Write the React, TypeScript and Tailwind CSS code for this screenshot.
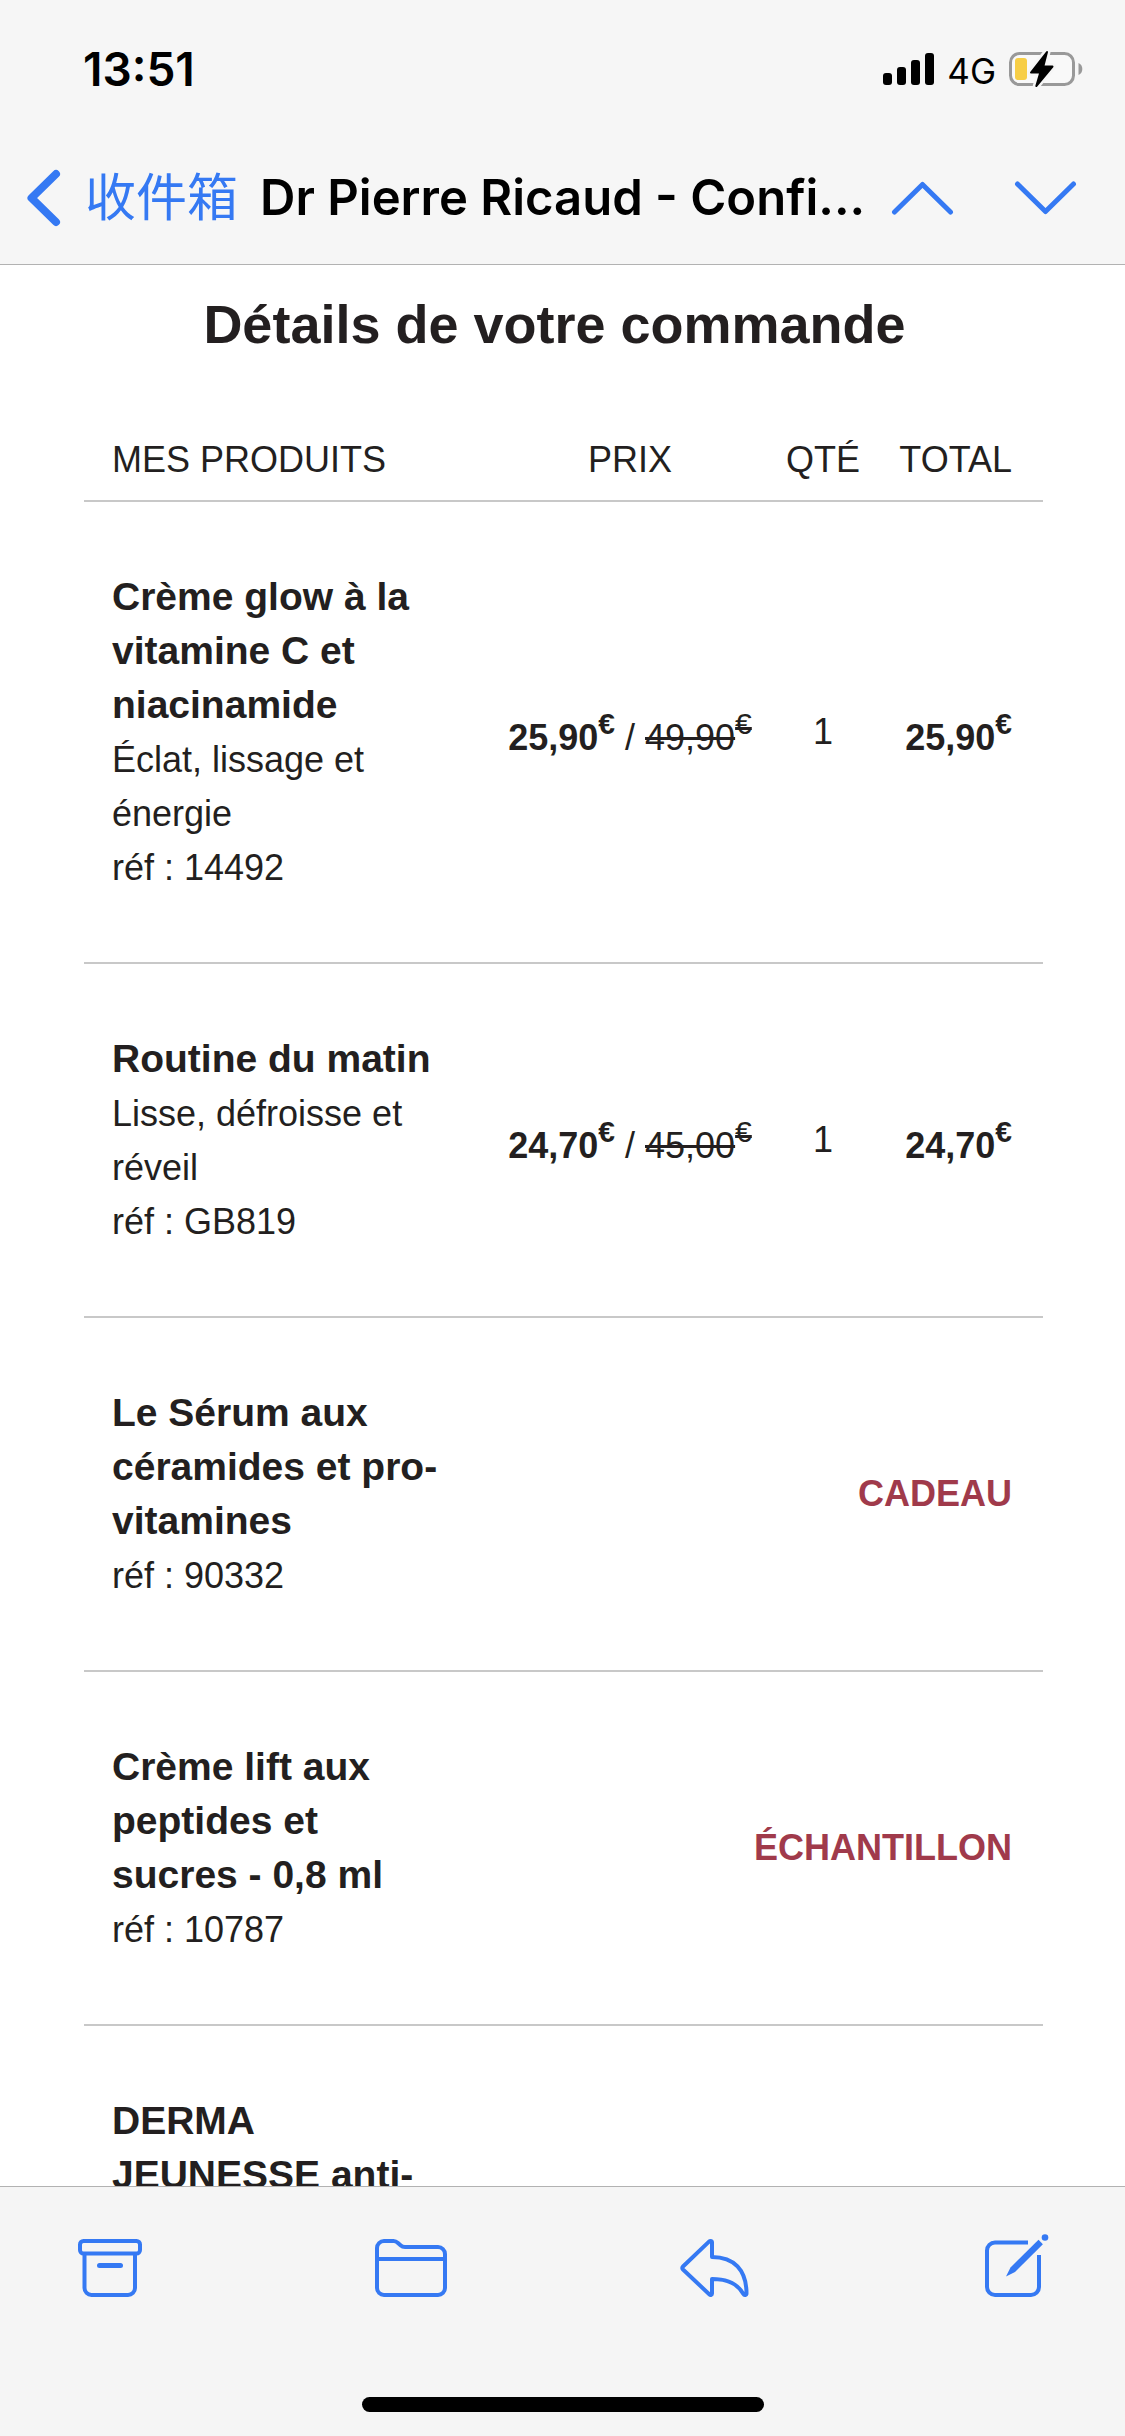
import { ReactNode } from "react";

type Product = {
  name: string;
  description?: string;
  reference?: string;
  price?: string;
  oldPrice?: string;
  quantity?: number;
  label?: string;
};

const products: Product[] = [
  {
    name: "Crème glow à la vitamine C et niacinamide",
    description: "Éclat, lissage et énergie",
    reference: "14492",
    price: "25,90",
    oldPrice: "49,90",
    quantity: 1,
  },
  {
    name: "Routine du matin",
    description: "Lisse, défroisse et réveil",
    reference: "GB819",
    price: "24,70",
    oldPrice: "45,00",
    quantity: 1,
  },
  { name: "Le Sérum aux céramides et pro-vitamines", reference: "90332", label: "CADEAU" },
  { name: "Crème lift aux peptides et sucres - 0,8 ml", reference: "10787", label: "ÉCHANTILLON" },
  { name: "DERMA JEUNESSE anti-" },
];

function Euro() {
  return <sup className="text-[30px] top-[-16px]">€</sup>;
}

function StatusBar() {
  return (
    <div className="flex h-[132px] items-center justify-between pt-[6px] pl-[83px] pr-[42px]">
      <span className="text-[46px] leading-[56px] font-semibold">13:51</span>
      <div className="flex items-center">
        <svg width="51" height="32" viewBox="0 0 51 32" aria-hidden="true">
          <rect x="0" y="20" width="9" height="12" rx="3" />
          <rect x="14" y="14" width="9" height="18" rx="3" />
          <rect x="28" y="7" width="9" height="25" rx="3" />
          <rect x="42" y="0" width="9" height="32" rx="3" />
        </svg>
        <span className="ml-[13px] pt-[3px] text-[35px] leading-[44px]">4G</span>
        <svg className="ml-[13px]" width="74" height="38" viewBox="0 0 74 38" aria-hidden="true">
          <rect x="1.500" y="3.500" width="63" height="31" rx="9" fill="#f9f9f9" stroke="#999999" strokeWidth="3" />
          <path d="M69.500 13c2.400 1 3.800 3.300 3.800 6s-1.400 5-3.800 6z" fill="#999999" />
          <rect x="6" y="8" width="12" height="22" rx="3" fill="#f7ce46" />
          <path
            d="M38 2L22 22.500H31.300L27.300 36L43.500 16.500H34.300z"
            fill="#000000"
            stroke="#f6f6f6"
            strokeWidth="7"
            strokeLinejoin="round"
          />
          <path
            d="M38 2L22 22.500H31.300L27.300 36L43.500 16.500H34.300z"
            stroke="#000000"
            strokeWidth="2"
            strokeLinejoin="round"
          />
        </svg>
      </div>
    </div>
  );
}

function NavBar() {
  return (
    <nav className="flex h-[132px] items-center justify-between pl-[27px] pr-[48px]">
      <div className="flex items-center whitespace-nowrap">
        <button className="flex items-center text-[#3579f3]">
          <svg width="34" height="58" viewBox="0 0 34 58" fill="none" stroke="currentColor" aria-hidden="true">
            <path d="M29 5L4.500 29L29 53" strokeWidth="8" strokeLinecap="round" strokeLinejoin="round" />
          </svg>
          <span className="ml-6 text-[51px] leading-[60px]">收件箱</span>
        </button>
        <h1 className="ml-[22px] text-[49px] leading-[60px] font-semibold">Dr Pierre Ricaud - Confi...</h1>
      </div>
      <div className="flex items-center gap-[60px] text-[#3579f3]">
        <button aria-label="上一封">
          <svg className="block" width="63" height="34" viewBox="0 0 63 34" fill="none" stroke="currentColor">
            <path d="M3.500 31L31.500 3.500L59.500 31" strokeWidth="5" strokeLinecap="round" strokeLinejoin="round" />
          </svg>
        </button>
        <button aria-label="下一封">
          <svg className="block" width="63" height="34" viewBox="0 0 63 34" fill="none" stroke="currentColor">
            <path d="M3.500 3L31.500 30.500L59.500 3" strokeWidth="5" strokeLinecap="round" strokeLinejoin="round" />
          </svg>
        </button>
      </div>
    </nav>
  );
}

function ProductRow({ product }: { product: Product }) {
  return (
    <tr className="border-b-2 border-[#c8c8c8]">
      <td className="pt-[68px] pb-[67px] pl-7 pr-9">
        <p className="text-[39px] font-bold">{product.name}</p>
        <div className="pt-px">
          {product.description && <p>{product.description}</p>}
          {product.reference && <p>réf : {product.reference}</p>}
        </div>
      </td>
      {product.price ? (
        <>
          <td className="pt-[12px] text-center whitespace-nowrap">
            <b>
              {product.price}
              <Euro />
            </b>{" "}
            /{" "}
            <s>
              {product.oldPrice}
              <Euro />
            </s>
          </td>
          <td className="text-center">{product.quantity}</td>
          <td className="pt-[12px] pr-[31px] text-right font-bold">
            {product.price}
            <Euro />
          </td>
        </>
      ) : (
        <td colSpan={3} className="pr-[31px] text-right font-bold text-[#a03a4b]">
          {product.label}
        </td>
      )}
    </tr>
  );
}

function ToolbarButton({ label, width, children }: { label: string; width: number; children: ReactNode }) {
  return (
    <button aria-label={label}>
      <svg
        className="block"
        width={width}
        height="64"
        viewBox={`0 0 ${width} 64`}
        fill="none"
        stroke="currentColor"
        strokeWidth="4"
        strokeLinejoin="round"
      >
        {children}
      </svg>
    </button>
  );
}

function Toolbar() {
  return (
    <footer className="flex h-[250px] shrink-0 flex-col items-center justify-between border-t border-[#b2b2b2] bg-[#f5f5f5] pt-[47px] pb-6">
      <div className="flex w-full items-center justify-between pl-[78px] pr-[76px] text-[#3579f3]">
        <ToolbarButton label="归档" width={64}>
          <rect x="2" y="7" width="60" height="12.500" rx="3.500" />
          <path d="M6.500 19.500V54a7 7 0 0 0 7 7H50a7 7 0 0 0 7-7V19.500" />
          <path d="M21.500 31.500H42.500" strokeWidth="5" strokeLinecap="round" />
        </ToolbarButton>
        <ToolbarButton label="移动" width={72}>
          <path d="M2 14a7 7 0 0 1 7-7H18.500c2 0 3 .6 4.500 2l2.500 2.300c1.200 1.100 2.500 1.700 4.500 1.700H63a7 7 0 0 1 7 7V54a7 7 0 0 1-7 7H9a7 7 0 0 1-7-7z" />
          <path d="M2 25H70" />
        </ToolbarButton>
        <ToolbarButton label="回复" width={72}>
          <path d="M30.500 7c1 0 1.500.6 1.500 1.500V23c22 0 34.500 13 34.500 36.500c0 1.700-2.300 2-3.100.6C57.500 49.500 48 45 32 45V59.500c0 1.300-1.400 2-2.500 1L3 35.500c-1-1-1-2 0-3L29 7.600c.5-.4 1-.6 1.500-.6z" />
        </ToolbarButton>
        <ToolbarButton label="新邮件" width={64}>
          <path d="M43 8.500H10a8 8 0 0 0-8 8V53a8 8 0 0 0 8 8H46a8 8 0 0 0 8-8V21" strokeLinejoin="miter" />
          <path d="M53.800 5.500L58.200 9.900L30.300 37.700L21.500 42L25.800 33.300z" fill="currentColor" stroke="#f5f5f5" strokeWidth="6" />
          <path d="M53.500 5.800L57.900 10.200L30 38L21 42.500L25.500 33.500z" fill="currentColor" stroke="none" />
          <circle cx="60" cy="3.500" r="3.300" fill="currentColor" stroke="none" />
        </ToolbarButton>
      </div>
      <div className="h-[15px] w-[402px] rounded-full bg-black" />
    </footer>
  );
}

export default function App() {
  return (
    <div className="flex h-screen flex-col bg-white font-['Inter','Noto_Sans_CJK_SC',sans-serif] text-black">
      <header className="shrink-0 border-b border-[#b2b2b2] bg-[#f6f6f6]">
        <StatusBar />
        <NavBar />
      </header>

      <main className="min-h-0 flex-1 overflow-hidden pt-[19px] pl-[84px] pr-[82px] font-['Liberation_Sans',Arial,sans-serif] text-[#231f20]">
        <h2 className="pr-[18px] text-center text-[54px] leading-[80px] font-bold">Détails de votre commande</h2>
        <table className="w-full table-fixed border-collapse text-[36px] leading-[54px]">
          <thead>
            <tr className="border-b-2 border-[#c8c8c8]">
              <th className="w-[400px] pt-[69px] pb-[13px] pl-7 text-left font-normal">MES PRODUITS</th>
              <th className="w-[292px] pt-[69px] pb-[13px] font-normal">PRIX</th>
              <th className="w-[94px] pt-[69px] pb-[13px] font-normal">QTÉ</th>
              <th className="pt-[69px] pb-[13px] pr-[31px] text-right font-normal">TOTAL</th>
            </tr>
          </thead>
          <tbody>
            {products.map((product) => (
              <ProductRow key={product.name} product={product} />
            ))}
          </tbody>
        </table>
      </main>

      <Toolbar />
    </div>
  );
}
